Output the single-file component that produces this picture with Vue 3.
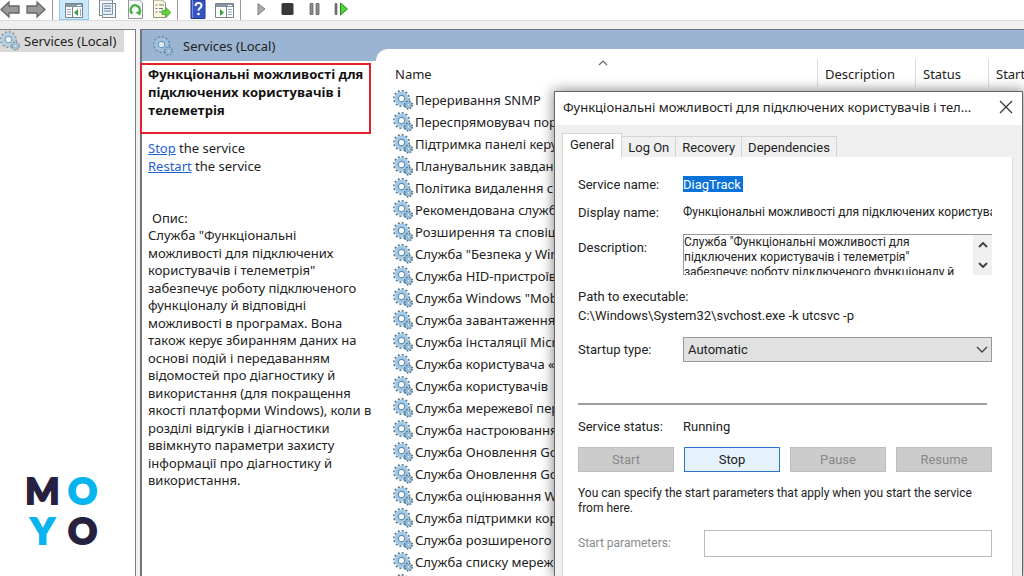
<script setup>
import { ref } from 'vue'

const services = [
  'Переривання SNMP',
  'Переспрямовувач портів',
  'Підтримка панелі керування',
  'Планувальник завдань',
  'Політика видалення смарт-карток',
  'Рекомендована служба',
  'Розширення та сповіщення',
  'Служба "Безпека у Windows"',
  'Служба HID-пристроїв',
  'Служба Windows "Mobile"',
  'Служба завантаження',
  'Служба інсталяції Microsoft',
  'Служба користувача «',
  'Служба користувачів',
  'Служба мережевої передачі',
  'Служба настроювання',
  'Служба Оновлення Google',
  'Служба Оновлення Google',
  'Служба оцінювання Windows',
  'Служба підтримки користувачів',
  'Служба розширеного',
  'Служба списку мереж',
  'Служба сховища'
]

const description = [
  'Служба "Функціональні',
  'можливості для підключених',
  'користувачів і телеметрія"',
  'забезпечує роботу підключеного',
  'функціоналу й відповідні',
  'можливості в програмах. Вона',
  'також керує збиранням даних на',
  'основі подій і передаванням',
  'відомостей про діагностику й',
  'використання (для покращення',
  'якості платформи Windows), коли в',
  'розділі відгуків і діагностики',
  'ввімкнуто параметри захисту',
  'інформації про діагностику й',
  'використання.'
]

const tabs = ['General', 'Log On', 'Recovery', 'Dependencies']
const activeTab = ref('General')
const serviceName = ref('DiagTrack')
const displayName = ref('Функціональні можливості для підключених користувачів і телеметрія')
const fullText = ref('Служба "Функціональні можливості для\nпідключених користувачів і телеметрія"\nзабезпечує роботу підключеного функціоналу й')
const startup = ref('Automatic')
const params = ref('')
</script>

<template>
  <div class="console">
    <svg class="defs" aria-hidden="true">
      <symbol id="gear" viewBox="0 0 20 20">
        <circle cx="8.500" cy="8.500" r="7.600" fill="none" stroke="#54798f" stroke-width="1.800" stroke-dasharray="2 1.980" />
        <circle cx="8.500" cy="8.500" r="5.200" fill="#fff" stroke="#a6cae6" stroke-width="3.800" />
        <circle cx="8.500" cy="8.500" r="3.200" fill="#fff" stroke="#5f92ba" stroke-width="1.200" />
        <circle cx="15.500" cy="15" r="3.800" fill="#9fc3de" stroke="#4f7386" stroke-width="1.600" stroke-dasharray="1.600 1.380" />
        <circle cx="15.500" cy="15" r="1.600" fill="#d6e8f5" stroke="#7fabcb" stroke-width="1" />
      </symbol>
    </svg>

    <nav class="toolbar" aria-label="Toolbar">
      <button aria-label="Back"><svg viewBox="0 0 20 20"><path d="M1 9.500 9 2v4h10v7H9v4z" fill="#999" stroke="#666" stroke-width="1.300" /></svg></button>
      <button aria-label="Forward"><svg viewBox="0 0 20 20"><path d="M19 9.500 11 2v4H1v7h10v4z" fill="#999" stroke="#666" stroke-width="1.300" /></svg></button>
      <i class="sep"></i>
      <button class="on" aria-label="Show console tree">
        <svg viewBox="0 0 20 20"><path d="M1.500 3.500h17v14h-17z" fill="#fff" stroke="#77828d" /><path d="M2 4h16v3H2z" fill="#8796a6" /><path d="M13 5.500h4" stroke="#fff" /><path d="M8.500 7v10" stroke="#77828d" /><path d="M3 9.500h4M3 12h4M3 14.500h4M16.500 9v7" stroke="#8ca5bd" /><path d="m14 9-4 3.500 4 3.500z" fill="#36a33a" /></svg>
      </button>
      <button aria-label="Properties">
        <svg viewBox="0 0 20 20"><path d="M2.500 0v15.500h3v2h13V3.500h-3V0z" fill="#f5f7f9" stroke="#7b858e" /><path d="M5.500 3.500h10v11h-10z" fill="#e7edf3" stroke="#7b95ad" /><path d="M7 6h7M7 8.500h7M7 11h7" stroke="#6f8ca8" /></svg>
      </button>
      <button aria-label="Refresh">
        <svg viewBox="0 0 20 20"><path d="M3.500 0v18.500h14V3l-3-3z" fill="#fbfbfb" stroke="#8f979d" /><path d="M7.500 13.500a4.500 4.500 0 1 1 7-2.500" fill="none" stroke="#3fae3b" stroke-width="2.200" /><path d="m16.500 10-1.500 5.500-4.500-3z" fill="#3fae3b" /></svg>
      </button>
      <button aria-label="Export list">
        <svg viewBox="0 0 20 20"><path d="M2.500 0v17.500h12V3l-3-3z" fill="#fdf8dd" stroke="#8f8f86" /><path d="M4.500 5h2M4.500 8.500h2M4.500 12h2M8 5h5M8 8.500h4M8 12h3" stroke="#69789a" /><path d="M11 10.500h4v-3l5 5-5 5v-3h-4z" fill="#63cf3f" stroke="#38a523" stroke-width=".7" /></svg>
      </button>
      <i class="sep"></i>
      <button class="lead" aria-label="Help">
        <svg viewBox="0 0 20 20"><path d="M3 0h14v18.500H3z" fill="#3556c4" stroke="#1f378f" /><path d="M4.500 0v18" stroke="#7c95ea" /><path d="M7.500 6c0-4 6-4 6-.5 0 2.500-3 2.500-3 5" fill="none" stroke="#fff" stroke-width="2" /><circle cx="10.500" cy="14" r="1.300" fill="#fff" /></svg>
      </button>
      <button aria-label="Show action pane">
        <svg viewBox="0 0 20 20"><path d="M1.500 3.500h18v14h-18z" fill="#fff" stroke="#77828d" /><path d="M2 4h17v3H2z" fill="#8796a6" /><path d="M14 5.500h4" stroke="#fff" /><path d="M12.500 7v10" stroke="#77828d" /><path d="M14 9.500h4M14 12h4M14 14.500h4" stroke="#8ca5bd" /><path d="m6 9 4 3.500L6 16z" fill="#36a33a" /></svg>
      </button>
      <i class="sep"></i>
      <button class="lead" aria-label="Start service"><svg viewBox="0 0 20 20"><path d="m7 3.500 7 5.500-7 6z" fill="#aaa" stroke="#808080" /></svg></button>
      <button aria-label="Stop service"><svg viewBox="0 0 20 20"><rect x="4.500" y="3" width="12" height="12" rx="1.500" fill="#383838" /></svg></button>
      <button aria-label="Pause service"><svg viewBox="0 0 20 20"><path d="M7 3.500h3v11H7zM13 3.500h3v11h-3z" fill="#8a8a8a" stroke="#666" stroke-width=".8" /></svg></button>
      <button aria-label="Restart service"><svg viewBox="0 0 20 20"><path d="M6 3.500h2v11H6z" fill="#777" stroke="#555" stroke-width=".6" /><path d="m11.500 3 7 6-7 6z" fill="#4fd336" stroke="#27921d" /></svg></button>
    </nav>

    <div class="panes">
      <aside class="tree">
        <a href="#" class="node"><svg><use href="#gear" /></svg>Services (Local)</a>
        <div class="logo"><b>M</b><b class="sky">O</b><b class="sky">Y</b><b>O</b></div>
      </aside>

      <main class="view">
        <section class="detail">
          <header><svg><use href="#gear" /></svg>Services (Local)</header>
          <h1>Функціональні можливості для<br>підключених користувачів і<br>телеметрія</h1>
          <div class="actions">
            <p><a href="#">Stop</a> the service</p>
            <p><a href="#">Restart</a> the service</p>
          </div>
          <div class="about">
            <span class="caption">Опис:</span>
            <span v-for="line in description" :key="line">{{ line }}</span>
          </div>
        </section>

        <section class="list">
          <table>
            <thead>
              <tr>
                <th class="name">Name<svg viewBox="0 0 10 6"><path d="m1 5 4-4 4 4" fill="none" stroke="#666" stroke-width="1.200" /></svg></th>
                <th class="desc">Description</th>
                <th class="status">Status</th>
                <th class="start">Startup Type</th>
              </tr>
            </thead>
            <tbody>
              <tr v-for="(name, i) in services" :key="i">
                <td colspan="4"><div class="item"><svg><use href="#gear" /></svg>{{ name }}</div></td>
              </tr>
            </tbody>
          </table>
        </section>
      </main>
    </div>

    <div class="dialog" role="dialog" aria-labelledby="title">
      <header class="titlebar">
        <h2 id="title">Функціональні можливості для підключених користувачів і тел...</h2>
        <button aria-label="Close"><svg viewBox="0 0 14 14"><path d="m1 1 12 12M13 1 1 13" stroke="#333" stroke-width="1.200" /></svg></button>
      </header>
      <div class="tabs" role="tablist">
        <button v-for="tab in tabs" :key="tab" role="tab" :class="{ active: tab === activeTab }" @click="activeTab = tab">{{ tab }}</button>
      </div>
      <form class="sheet" @submit.prevent>
        <div class="row">
          <label for="sname">Service name:</label>
          <input id="sname" v-model="serviceName" class="selected" readonly>
        </div>
        <div class="row">
          <label for="dname">Display name:</label>
          <input id="dname" v-model="displayName" class="plain" readonly>
        </div>
        <div class="row tall">
          <label for="sdesc">Description:</label>
          <div class="memo">
            <textarea id="sdesc" v-model="fullText" readonly></textarea>
            <div class="scroll">
              <svg viewBox="0 0 10 6"><path d="m1 5 4-4 4 4" fill="none" stroke="#444" stroke-width="2" /></svg>
              <svg viewBox="0 0 10 6"><path d="m1 1 4 4 4-4" fill="none" stroke="#444" stroke-width="2" /></svg>
            </div>
          </div>
        </div>
        <div class="path">
          <p>Path to executable:</p>
          <p>C:\Windows\System32\svchost.exe -k utcsvc -p</p>
        </div>
        <div class="row startup">
          <label for="stype">Startup type:</label>
          <div class="combo">
            <select id="stype" v-model="startup"><option>Automatic</option><option>Manual</option><option>Disabled</option></select>
            <svg viewBox="0 0 12 8"><path d="m1 1 5 5 5-5" fill="none" stroke="#444" stroke-width="1.300" /></svg>
          </div>
        </div>
        <hr>
        <div class="row state"><span>Service status:</span><span>Running</span></div>
        <div class="buttons">
          <button disabled>Start</button>
          <button class="primary">Stop</button>
          <button disabled>Pause</button>
          <button disabled>Resume</button>
        </div>
        <p class="note">You can specify the start parameters that apply when you start the service<br>from here.</p>
        <div class="params">
          <label for="sparams">Start parameters:</label>
          <input id="sparams" v-model="params" disabled>
        </div>
      </form>
    </div>
  </div>
</template>

<style>
body { margin: 0; overflow: hidden; }
</style>

<style scoped>
* { box-sizing: border-box; }
.console { position: relative; display: flex; flex-direction: column; height: 100vh; overflow: hidden; background: #f0f0f0; color: #222; font: 13px/18px "Noto Sans", "Open Sans", sans-serif; }
.defs { position: absolute; width: 0; height: 0; }
p, h1, h2 { margin: 0; font-size: inherit; }
button { padding: 0; border: 0; background: none; color: inherit; font: inherit; }
svg { display: block; flex: none; }
a { color: #1f5fd0; }

.toolbar { display: flex; gap: 6px; height: 21px; flex: none; background: #fff; border-bottom: 1px solid #dcdcdc; }
.toolbar button { display: flex; justify-content: center; width: 20px; height: 20px; }
.toolbar svg { width: 20px; height: 20px; }
.toolbar .on { width: 30px; margin-right: 2px; background: #cce8fb; border: solid #90c8f0; border-width: 0 1px 1px; }
.toolbar .on + button { margin-right: 2px; }
.toolbar .lead { margin-left: 4px; }
.toolbar .sep { width: 1px; background: #9a9a9a; }

.panes { display: flex; flex: 1; gap: 4px; min-height: 0; margin-top: 8px; }
.tree { display: flex; flex-direction: column; justify-content: space-between; width: 136px; flex: none; background: #fff; border: solid #7d7f86; border-width: 1px 1px 0 0; }
.node { display: flex; align-items: center; gap: 4px; width: 124px; height: 22px; background: #d9d9d9; color: #222; text-decoration: none; white-space: nowrap; }
.node svg, .detail header svg { width: 20px; height: 20px; opacity: .7; }
.logo { display: grid; grid-template-columns: 40px 40px; grid-auto-rows: 40px; align-self: center; margin: 0 10px 26px 0; color: #25213f; font: 900 36px/40px Lato, "Open Sans", sans-serif; text-align: center; }
.logo b { font-weight: 900; -webkit-text-stroke: 2px currentColor; }
.logo .sky { color: #08b4ee; }

.view { display: flex; flex: 1; min-width: 0; background: #9ab4d2; border: solid #70747c; border-width: 1px 0 0 2px; }
.detail { display: flex; flex-direction: column; width: 234px; flex: none; background: #fff; white-space: nowrap; }
.detail header { display: flex; align-items: center; gap: 10px; height: 31px; padding-left: 11px; background: #9ab4d2; flex: none; }
h1 { height: 71px; flex: none; margin: 2px 5px 0 -2px; padding-left: 6px; border: 2px solid #e3202b; font: 700 13px/18px "Open Sans", "Noto Sans", sans-serif; color: #111; }
.actions { padding: 5px 0 0 6px; }
.about { display: grid; grid-auto-rows: 17px 18px; margin-top: 34px; padding-left: 6px; }
.caption { padding-left: 4px; }

.list { flex: 1; min-width: 0; margin-top: 19px; overflow: hidden; background: #fff; border-top-left-radius: 12px; }
table { width: 100%; table-layout: fixed; border-collapse: collapse; white-space: nowrap; }
th { height: 40px; padding: 9px 0 0 8px; font-weight: 400; text-align: left; vertical-align: middle; overflow: hidden; background: linear-gradient(#ddd, #ddd) 0 10px / 1px 28px no-repeat; }
th.name { position: relative; padding-left: 19px; background: none; }
th.name svg { position: absolute; top: 11px; left: 222px; width: 10px; height: 6px; }
.desc { width: 98px; }
.status { width: 73px; }
.start { width: 36px; }
td { padding: 0; }
.item { display: flex; align-items: center; gap: 2px; height: 22px; padding-left: 17px; }
.item svg { width: 20px; height: 20px; }

.dialog { position: absolute; top: 91px; right: 1px; bottom: 0; left: 554px; display: flex; flex-direction: column; background: #f0f0f0; border: solid #666; border-width: 1px 1px 0; box-shadow: 0 0 12px 1px rgba(0, 0, 0, .45); }
.titlebar { display: flex; align-items: center; justify-content: space-between; height: 33px; flex: none; padding: 0 9px 3px 8px; background: #fff; white-space: nowrap; }
.titlebar h2 { font-weight: 400; }
.titlebar svg { width: 14px; height: 14px; }
.tabs, .sheet { font: 13px/15px Roboto, "Liberation Sans", sans-serif; }
.tabs { display: flex; align-items: flex-end; height: 32px; flex: none; padding: 0 7px; }
.tabs button { height: 21px; padding: 0 6px; border: 1px solid #d4d4d4; border-width: 1px 1px 0 0; }
.tabs .active { height: 24px; padding: 0 7px 3px; border-left-width: 1px; background: #fff; }
.sheet { flex: 1; margin: 0 9px 0 7px; padding: 13px 20px 0 15px; background: #fff; border: solid #d8d8d8; border-width: 0 1px; }
.row { display: grid; grid-template-columns: 105px 1fr; align-items: center; height: 28px; }
input, textarea, select { margin: 0; padding: 0; border: 0; border-radius: 0; color: inherit; font: inherit; outline: 0; }
.selected { width: 60px; height: 16px; background: #0a72d8; color: #fff; }
.plain { width: 100%; background: none; }
.tall { align-items: start; height: 56px; padding-top: 8px; }
.tall label { padding-top: 6px; }
.memo { display: flex; height: 41px; border: solid #999; border-width: 1px 0 0 1px; }
textarea { flex: 1; min-width: 0; height: 40px; overflow: hidden; resize: none; white-space: pre; background: none; }
.scroll { display: flex; flex-direction: column; justify-content: space-around; align-items: center; width: 19px; background: #f0f0f0; }
.scroll svg { width: 10px; height: 6px; }
.path { display: grid; gap: 4px; padding-top: 7px; }
.startup { margin-top: 12px; }
.combo { position: relative; }
.combo select { display: block; width: 100%; height: 25px; padding-left: 4px; appearance: none; background: #e1e1e1; border: 1px solid #999; }
.combo svg { position: absolute; top: 9px; right: 4px; width: 12px; height: 8px; pointer-events: none; }
hr { height: 2px; margin: 40px 5px 0 0; border: 0; background: #a0a0a0; }
.state { margin-top: 7px; }
.buttons { display: grid; grid-template-columns: repeat(4, 1fr); gap: 10px; margin-top: 7px; }
.buttons button { height: 25px; border: 1px solid #bdbdbd; background: #ccc; color: #888; }
.buttons .primary { border-color: #2f73d0; background: #e5f1fb; color: #222; }
.plain, textarea, .note, .params { font-size: 12px; }
.note { padding-top: 14px; white-space: nowrap; }
.params { display: grid; grid-template-columns: 126px 1fr; align-items: center; margin-top: 14px; color: #8a8a8a; }
.params input { width: 100%; height: 27px; border: 1px solid #bbb; background: #fff; }
</style>
